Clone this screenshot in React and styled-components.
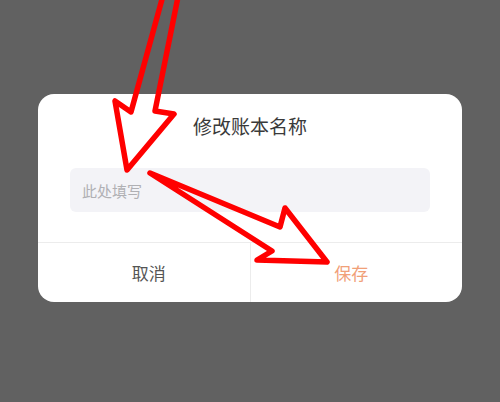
import React from "react";
import styled, { createGlobalStyle } from "styled-components";

const GlobalStyle = createGlobalStyle`
  html, body {
    margin: 0;
    padding: 0;
    background: #616161;
    font-family: "Noto Sans CJK SC", "Noto Sans", sans-serif;
  }
`;

const App = () => {
  return (
    <Page>
      <GlobalStyle />
      <Dialog>
        <Title>修改账本名称</Title>
        <Field placeholder="此处填写" />
        <Footer>
          <FooterButton>取消</FooterButton>
          <FooterButton primary>保存</FooterButton>
        </Footer>
      </Dialog>
      <Arrows viewBox="0 0 500 402">
        <polygon points="164,-8 131,112 115,101 127,170 174,114 155,111 179,-8" />
        <polygon points="150,173 280,227 285,208 327,262 257,260 272,251" />
      </Arrows>
    </Page>
  );
};

export default App;

const Page = styled.div`
  position: relative;
  width: 500px;
  height: 402px;
  box-sizing: border-box;
  padding-top: 94px;
  display: flex;
  justify-content: center;
  align-items: flex-start;
  overflow: hidden;
`;
const Dialog = styled.div`
  width: 424px;
  background: #ffffff;
  border-radius: 16px;
  display: flex;
  flex-direction: column;
  align-items: center;
  padding-top: 20px;
  overflow: hidden;
`;
const Title = styled.div`
  font-size: 19px;
  line-height: 24px;
  color: #3a3a3a;
`;
const Field = styled.input`
  box-sizing: border-box;
  width: 360px;
  height: 44px;
  margin: 30px 0 30px 0;
  padding: 0 12px;
  border: none;
  outline: none;
  border-radius: 6px;
  background: #f3f3f7;
  font-family: inherit;
  font-size: 15px;
  color: #333;
  &::placeholder {
    color: #b0b0b4;
  }
`;
const Footer = styled.div`
  align-self: stretch;
  display: flex;
  height: 59px;
  padding: 0 10px;
  border-top: 1px solid #ececec;
`;
const FooterButton = styled.div`
  flex: 1;
  display: flex;
  align-items: center;
  justify-content: center;
  font-size: 17px;
  color: ${(p) => (p.primary ? "#f1a078" : "#555555")};
  & + & {
    border-left: 1px solid #ececec;
  }
`;
const Arrows = styled.svg`
  position: absolute;
  left: 0;
  top: 0;
  width: 500px;
  height: 402px;
  pointer-events: none;
  polygon {
    fill: none;
    stroke: #ff0000;
    stroke-width: 5.5;
    stroke-linejoin: round;
  }
`;
